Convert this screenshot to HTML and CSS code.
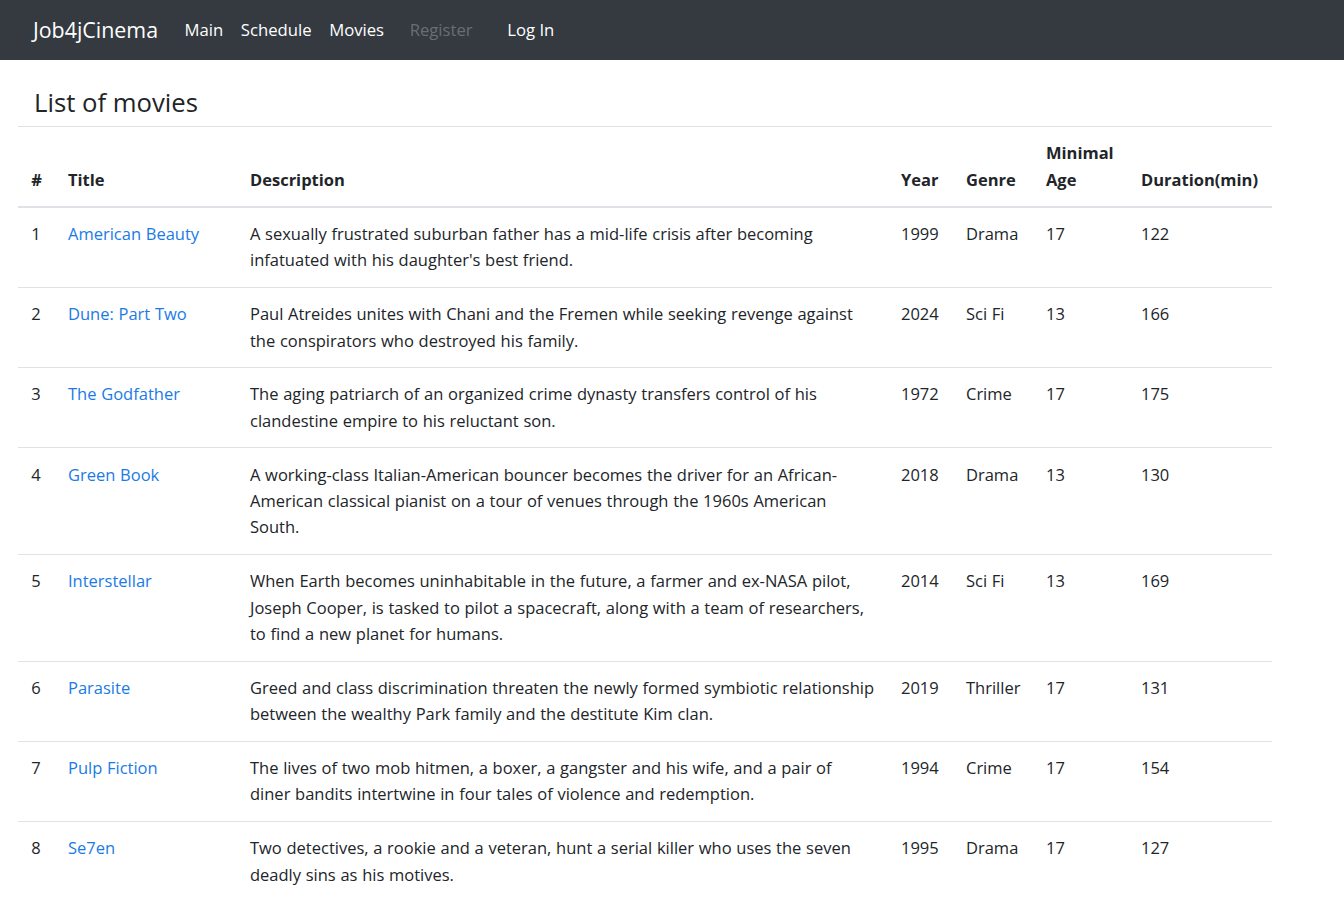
FILE: index.html
```html
<!DOCTYPE html>
<html lang="en">
<head>
<meta charset="utf-8">
<title>Job4jCinema - Movies</title>
<link rel="stylesheet" href="styles.css">
</head>
<body>
<nav class="navbar">
  <a class="brand" href="#">Job4jCinema</a>
  <ul class="nav">
    <li><a class="nav-link" href="#">Main</a></li>
    <li><a class="nav-link" href="#">Schedule</a></li>
    <li><a class="nav-link" href="#">Movies</a></li>
  </ul>
  <ul class="nav nav-right">
    <li><a class="nav-link disabled" href="#">Register</a></li>
    <li><a class="nav-link" href="#">Log In</a></li>
  </ul>
</nav>
<main class="page">
  <div class="card-head">
    <h4 class="title">List of movies</h4>
  </div>
  <table class="table">
    <colgroup>
      <col class="c-num"><col class="c-title"><col class="c-desc"><col class="c-year"><col class="c-genre"><col class="c-age"><col class="c-dur">
    </colgroup>
    <thead>
      <tr><th>#</th><th>Title</th><th>Description</th><th>Year</th><th>Genre</th><th>Minimal Age</th><th>Duration(min)</th></tr>
    </thead>
    <tbody>
      <tr><td>1</td><td><a href="#">American Beauty</a></td><td>A sexually frustrated suburban father has a mid-life crisis after becoming infatuated with his daughter's best friend.</td><td>1999</td><td>Drama</td><td>17</td><td>122</td></tr>
      <tr><td>2</td><td><a href="#">Dune: Part Two</a></td><td>Paul Atreides unites with Chani and the Fremen while seeking revenge against the conspirators who destroyed his family.</td><td>2024</td><td>Sci Fi</td><td>13</td><td>166</td></tr>
      <tr><td>3</td><td><a href="#">The Godfather</a></td><td>The aging patriarch of an organized crime dynasty transfers control of his clandestine empire to his reluctant son.</td><td>1972</td><td>Crime</td><td>17</td><td>175</td></tr>
      <tr><td>4</td><td><a href="#">Green Book</a></td><td>A working-class Italian-American bouncer becomes the driver for an African-American classical pianist on a tour of venues through the 1960s American South.</td><td>2018</td><td>Drama</td><td>13</td><td>130</td></tr>
      <tr><td>5</td><td><a href="#">Interstellar</a></td><td>When Earth becomes uninhabitable in the future, a farmer and ex-NASA pilot, Joseph Cooper, is tasked to pilot a spacecraft, along with a team of researchers, to find a new planet for humans.</td><td>2014</td><td>Sci Fi</td><td>13</td><td>169</td></tr>
      <tr><td>6</td><td><a href="#">Parasite</a></td><td>Greed and class discrimination threaten the newly formed symbiotic relationship between the wealthy Park family and the destitute Kim clan.</td><td>2019</td><td>Thriller</td><td>17</td><td>131</td></tr>
      <tr><td>7</td><td><a href="#">Pulp Fiction</a></td><td>The lives of two mob hitmen, a boxer, a gangster and his wife, and a pair of diner bandits intertwine in four tales of violence and redemption.</td><td>1994</td><td>Crime</td><td>17</td><td>154</td></tr>
      <tr><td>8</td><td><a href="#">Se7en</a></td><td>Two detectives, a rookie and a veteran, hunt a serial killer who uses the seven deadly sins as his motives.</td><td>1995</td><td>Drama</td><td>17</td><td>127</td></tr>
    </tbody>
  </table>
</main>
</body>
</html>
```
FILE: styles.css
```css
html, body {
  margin: 0;
  padding: 0;
}
body {
  font-family: "Open Sans", "Noto Sans", sans-serif;
  font-size: 16.5px;
  line-height: 26.4px;
  color: #212529;
  background: #fff;
}
a {
  text-decoration: none;
}
.navbar {
  height: 60px;
  background: #343a40;
  display: flex;
  align-items: center;
  padding: 0 0 0 33px;
  box-sizing: border-box;
}
.brand {
  color: #fff;
  font-size: 21.4px;
  margin-right: 17.6px;
  line-height: 30px;
}
.nav {
  list-style: none;
  margin: 0;
  padding: 0;
  display: flex;
}
.nav-link {
  display: block;
  color: #fff;
  font-size: 16.7px;
  padding: 8px 8.8px;
}
.nav-right {
  margin-left: 8px;
}
.nav-right li + li {
  margin-left: 17px;
}
.nav-link.disabled {
  color: #6a6e73;
}
.page {
  width: 1254px;
  margin-left: 18px;
}
.card-head {
  padding: 26px 16px 7px;
  border-bottom: 1px solid #dee2e6;
}
.title {
  margin: 0;
  font-size: 25.7px;
  font-weight: 500;
  line-height: 33px;
}
.table {
  width: 1254px;
  border-collapse: collapse;
  table-layout: fixed;
}
.c-num { width: 36.8px; }
.c-title { width: 182px; }
.c-desc { width: 651px; }
.c-year { width: 65px; }
.c-genre { width: 80px; }
.c-age { width: 95px; }
.c-dur { width: 144.2px; }
.table th,
.table td {
  padding: 13.2px;
  text-align: left;
  vertical-align: top;
  border-top: 1px solid #dee2e6;
}
.table td {
  word-spacing: 0.4px;
}
.table thead th {
  border-top: none;
  vertical-align: bottom;
  padding-top: 13.4px;
  padding-bottom: 12.6px;
  border-bottom: 2px solid #dee2e6;
  font-weight: 700;
}
.table td a {
  color: #1a7be6;
}
```
